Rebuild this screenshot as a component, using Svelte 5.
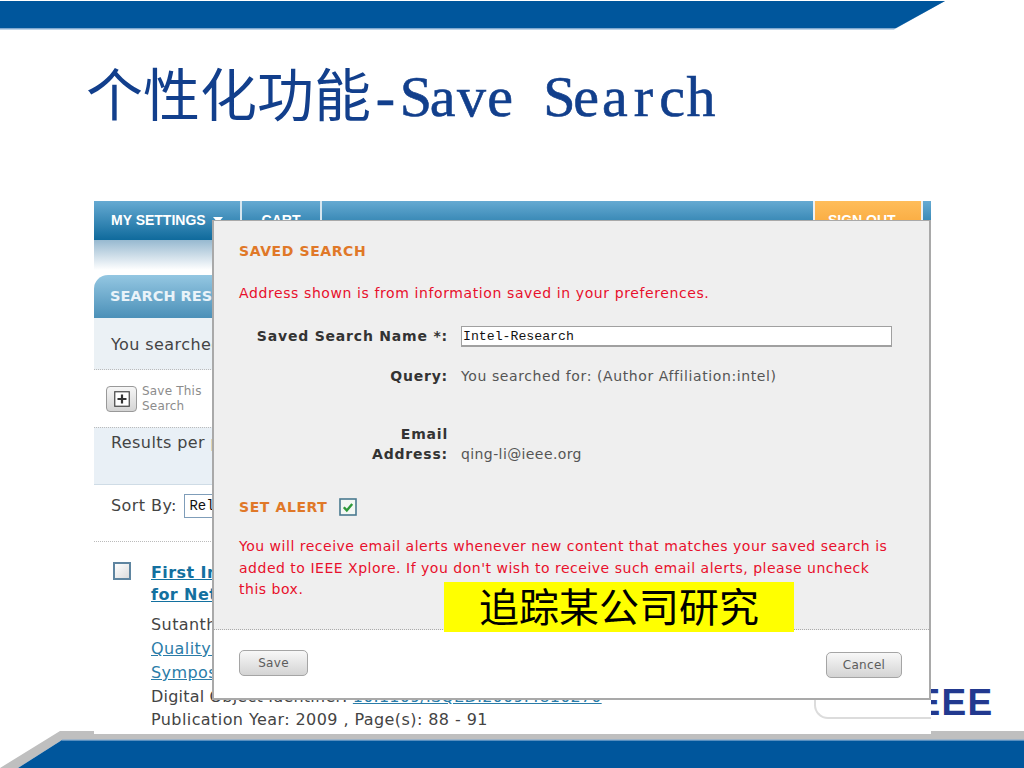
<script>
  const latin = '-Save Search'.split('');
</script>

<div class="slide">
  <svg class="band top" viewBox="0 0 1024 30" aria-hidden="true">
    <polygon points="0,29.5 894,29.5 945,1 0,1" fill="#7fa8cf" />
    <polygon points="0,28 896,28 945,1 0,1" fill="#00569c" />
  </svg>

  <h1 class="title"><span class="cjk">个性化功能</span>{#each latin as ch}<span class="lat">{ch === ' ' ? '\u00a0' : ch}</span>{/each}</h1>

  <svg class="band bottom" viewBox="0 0 1024 38" aria-hidden="true">
    <polygon points="0,38 60,1 1024,1 1024,10 62,10 18,38" fill="#bfbfbf" />
    <polygon points="18,38 62,10 1024,10 1024,38" fill="#00569c" />
    <rect x="62" y="9.5" width="962" height="1.2" fill="#7fa8cf" />
  </svg>

  <div class="ieee">IEEE</div>

  <section class="shot">
    <nav class="nav">
      <span class="nav-item first">MY SETTINGS <i class="tri"></i></span>
      <span class="nav-item cart">CART</span>
      <span class="nav-fill"></span>
      <span class="nav-item out">SIGN OUT</span>
      <span class="nav-end"></span>
    </nav>
    <div class="subbar"></div>
    <div class="tab">SEARCH RESULTS</div>
    <div class="searched">You searched for:</div>
    <div class="savebar">
      <span class="plus-btn">
        <svg viewBox="0 0 16 16" width="16" height="16" aria-hidden="true">
          <rect x="0.75" y="0.75" width="14.5" height="14.5" fill="#fff" stroke="#444" stroke-width="1.2" />
          <path d="M8 3.5v9M3.5 8h9" stroke="#333" stroke-width="2.2" />
        </svg>
      </span>
      <span class="save-this">Save This<br />Search</span>
    </div>
    <div class="perpage">Results per page:</div>
    <div class="sort">Sort By: <span class="sel">Relevance</span></div>
    <div class="result">
      <span class="chk"></span>
      <div class="res-body">
        <a class="res-title">First Insights into Quality<br />for Networks</a>
        <div class="meta meta-first">Sutanthavibul, S.</div>
        <div class="meta"><a>Quality Electronic Design</a></div>
        <div class="meta"><a>Symposium on</a></div>
        <div class="meta doi">Digital Object Identifier: <a>10.1109/ISQED.2009.4810270</a></div>
        <div class="meta year">Publication Year: 2009 , Page(s): 88 - 91</div>
      </div>
    </div>
  </section>

  <div class="logo-frame"></div>

  <section class="modal">
    <div class="modal-main">
      <h2>SAVED SEARCH</h2>
      <p class="red addr">Address shown is from information saved in your preferences.</p>
      <div class="form">
        <label class="l-name">Saved Search Name *:</label>
        <div class="input">Intel-Research</div>
        <label class="l-query">Query:</label>
        <div class="v-query">You searched for: (Author Affiliation:intel)</div>
        <label class="l-email">Email<br />Address:</label>
        <div class="v-email">qing-li@ieee.org</div>
      </div>
      <div class="alert">
        <span>SET ALERT</span>
        <svg class="check" viewBox="0 0 18 18" width="18" height="18" aria-hidden="true">
          <rect x="1" y="1" width="16" height="16" fill="#f4f8f4" stroke="#4a7a90" stroke-width="1.6" />
          <path d="M4.8 9.2l3 3.2 5.4-6.4" fill="none" stroke="#2f9a3a" stroke-width="2.4" />
        </svg>
      </div>
      <p class="red note">You will receive email alerts whenever new content that matches your saved search is<br />added to IEEE Xplore. If you don't wish to receive such email alerts, please uncheck<br />this box.</p>
    </div>
    <div class="modal-foot">
      <button class="btn save">Save</button>
      <button class="btn cancel">Cancel</button>
    </div>
  </section>

  <div class="callout">追踪某公司研究</div>
</div>

<style>
  :global(body) { margin: 0; background: #fff; }
  .slide {
    position: relative;
    width: 1024px;
    height: 768px;
    overflow: hidden;
    background: #fff;
    font-family: "DejaVu Sans", sans-serif;
  }
  .band { position: absolute; left: 0; display: block; width: 1024px; }
  .band.top { top: 0; height: 30px; }
  .band.bottom { bottom: 0; height: 38px; }

  .title {
    position: absolute;
    left: 86px;
    top: 53px;
    margin: 0;
    font-weight: 400;
    color: #123f8c;
    white-space: nowrap;
    line-height: 76px;
  }
  .cjk { font: 400 57px/76px "Noto Sans CJK SC", sans-serif; }
  .lat {
    display: inline-block;
    width: 28.7px;
    text-align: center;
    font: 400 58px/76px "Liberation Serif", serif;
    -webkit-text-stroke: 0.6px #123f8c;
  }

  .shot {
    position: absolute;
    left: 94px;
    top: 201px;
    width: 837px;
    height: 533px;
    overflow: hidden;
    display: flex;
    flex-direction: column;
    font-size: 16px;
    letter-spacing: 0.42px;
    color: #444;
    background: #fff;
  }
  .nav {
    display: flex;
    height: 39px;
    flex: none;
    letter-spacing: 0;
    background: linear-gradient(#66aad2, #0f6a9c);
  }
  .nav-item {
    box-sizing: border-box;
    color: #fff;
    font: 700 14px/39px "Liberation Sans", sans-serif;
    border-right: 2px solid #d6e6ef;
  }
  .first { width: 148px; padding-left: 17px; }
  .tri {
    display: inline-block;
    width: 0;
    height: 0;
    margin-left: 3px;
    vertical-align: 2px;
    border: 5px solid transparent;
    border-top: 6px solid #fff;
    border-bottom: 0;
  }
  .cart { width: 80px; text-align: center; }
  .nav-fill { flex: 1; }
  .out {
    width: 110px;
    padding-left: 13px;
    background: linear-gradient(#ffbd5a, #f6a030);
    border-left: 2px solid #f0f0f0;
    border-right: 2px solid #f0f0f0;
  }
  .nav-end { width: 8px; }
  .subbar {
    flex: none;
    height: 30px;
    margin-bottom: 5px;
    background: linear-gradient(#97b9d0, #fff);
  }
  .tab {
    flex: none;
    box-sizing: border-box;
    height: 43px;
    padding-left: 16px;
    border-top-left-radius: 14px;
    background: linear-gradient(#94c7e2, #4b90b8);
    color: #e9f3f9;
    font: 700 14.5px/43px "DejaVu Sans", sans-serif;
    letter-spacing: 0;
    white-space: nowrap;
  }
  .searched {
    flex: none;
    box-sizing: border-box;
    height: 52px;
    padding: 17px 0 0 17px;
    background: #ebf1f5;
    line-height: 20px;
    border-bottom: 1px dotted #bbb;
  }
  .savebar {
    flex: none;
    height: 57px;
    display: flex;
    align-items: center;
    gap: 5px;
    padding-left: 12px;
    box-sizing: border-box;
  }
  .plus-btn {
    width: 31px;
    height: 26px;
    box-sizing: border-box;
    display: flex;
    align-items: center;
    justify-content: center;
    border: 1px solid #999;
    border-radius: 4px;
    background: linear-gradient(#f6f6f6, #d4d4d4);
  }
  .save-this { font: 12px/15px "DejaVu Sans", sans-serif; letter-spacing: 0.2px; color: #8c8c8c; }
  .perpage {
    flex: none;
    box-sizing: border-box;
    height: 58px;
    padding: 5px 0 0 17px;
    background: #e9f0f6;
    line-height: 20px;
    border-top: 1px dotted #bbb;
    border-bottom: 1px solid #cfdce6;
  }
  .sort {
    flex: none;
    box-sizing: border-box;
    height: 57px;
    padding: 9px 0 0 17px;
    line-height: 22px;
    border-bottom: 1px dotted #bbb;
    white-space: nowrap;
  }
  .sel {
    display: inline-block;
    box-sizing: border-box;
    width: 60px;
    height: 24px;
    margin-left: 2px;
    padding-left: 4px;
    border: 1px solid #7f9db9;
    font: 14px/22px "Liberation Mono", monospace;
    letter-spacing: 0;
    color: #111;
    vertical-align: middle;
  }
  .result { display: flex; padding: 20px 0 0 19px; gap: 20px; }
  .chk {
    flex: none;
    width: 18px;
    height: 18px;
    box-sizing: border-box;
    border: 2px solid #5f85a0;
    background: linear-gradient(135deg, #fff, #dcdcdc);
  }
  .res-title {
    display: block;
    color: #13709f;
    font-weight: 700;
    font-size: 16px;
    line-height: 22px;
    text-decoration: underline;
    white-space: nowrap;
  }
  .meta { font-size: 16px; line-height: 24px; white-space: nowrap; }
  .meta-first { margin-top: 7px; }
  .meta a { color: #2a7ca8; text-decoration: underline; }
  .doi { letter-spacing: 0.2px; }
  .year { margin-top: -1px; }

  .logo-frame {
    position: absolute;
    left: 814px;
    top: 690px;
    width: 117px;
    height: 29px;
    box-sizing: border-box;
    border: 2px solid #dcdcdc;
    border-right: 0;
    border-top: 0;
    border-bottom-left-radius: 14px;
  }
  .ieee {
    position: absolute;
    left: 904px;
    top: 683px;
    color: #22398f;
    font: 700 37px/40px "Liberation Sans", sans-serif;
    letter-spacing: 1.3px;
  }

  .modal {
    position: absolute;
    left: 212px;
    top: 220px;
    width: 719px;
    height: 480px;
    box-sizing: border-box;
    border: 2px solid #a9a9a9;
    border-width: 1px 2px 2px 2px;
    background: #fff;
    display: flex;
    flex-direction: column;
    font-size: 14px;
    color: #333;
  }
  .modal-main {
    box-sizing: border-box;
    height: 409px;
    flex: none;
    padding: 21px 0 0 25px;
    background: #efefef;
    border-bottom: 1px dotted #aaa;
  }
  h2 {
    margin: 0;
    color: #e07828;
    font-size: 14px;
    line-height: 18px;
    font-weight: 700;
    letter-spacing: 0.6px;
  }
  .red { margin: 0; color: #e8102c; font-size: 14px; white-space: nowrap; }
  .addr { margin-top: 24px; line-height: 18px; letter-spacing: 0.6px; }
  .form {
    display: grid;
    grid-template-columns: 209px 1fr;
    column-gap: 13px;
    margin-top: 24px;
    line-height: 20px;
  }
  label { text-align: right; font-weight: 700; color: #333; letter-spacing: 0.8px; white-space: nowrap; }
  .input {
    box-sizing: border-box;
    width: 431px;
    height: 21px;
    padding-left: 1px;
    background: #fff;
    border: 2px solid #a0a0a0;
    border-width: 1px 1px 2px 1px;
    font: 13.2px/19px "Liberation Mono", monospace;
    color: #111;
  }
  .l-query { margin-top: 19px; }
  .v-query { color: #555; white-space: nowrap; margin-top: 19px; letter-spacing: 0.6px; }
  .l-email { margin-top: 38px; line-height: 20px; }
  .v-email { align-self: end; color: #555; letter-spacing: 0.4px; }
  .alert {
    display: flex;
    align-items: center;
    gap: 11px;
    margin-top: 34px;
    color: #e07828;
    font-weight: 700;
    letter-spacing: 0.6px;
  }
  .note { margin-top: 20px; line-height: 21.5px; letter-spacing: 0.51px; }
  .modal-foot {
    flex: 1;
    display: flex;
    justify-content: space-between;
    padding: 20px 27px 0 25px;
    align-items: flex-start;
  }
  .btn {
    box-sizing: border-box;
    height: 26px;
    border: 1px solid #a5a5a5;
    border-radius: 5px;
    background: linear-gradient(#f8f8f8, #d4d4d4);
    color: #5c5c5c;
    font: 400 12px/22px "DejaVu Sans", sans-serif;
    letter-spacing: 0.3px;
    padding: 0;
  }
  .save { width: 69px; }
  .cancel { width: 76px; margin-top: 2px; }

  .callout {
    position: absolute;
    left: 444px;
    top: 582px;
    width: 350px;
    height: 50px;
    background: #ffff00;
    color: #000;
    text-align: center;
    font: 400 40px/46px "Noto Sans CJK SC", sans-serif;
  }
</style>
